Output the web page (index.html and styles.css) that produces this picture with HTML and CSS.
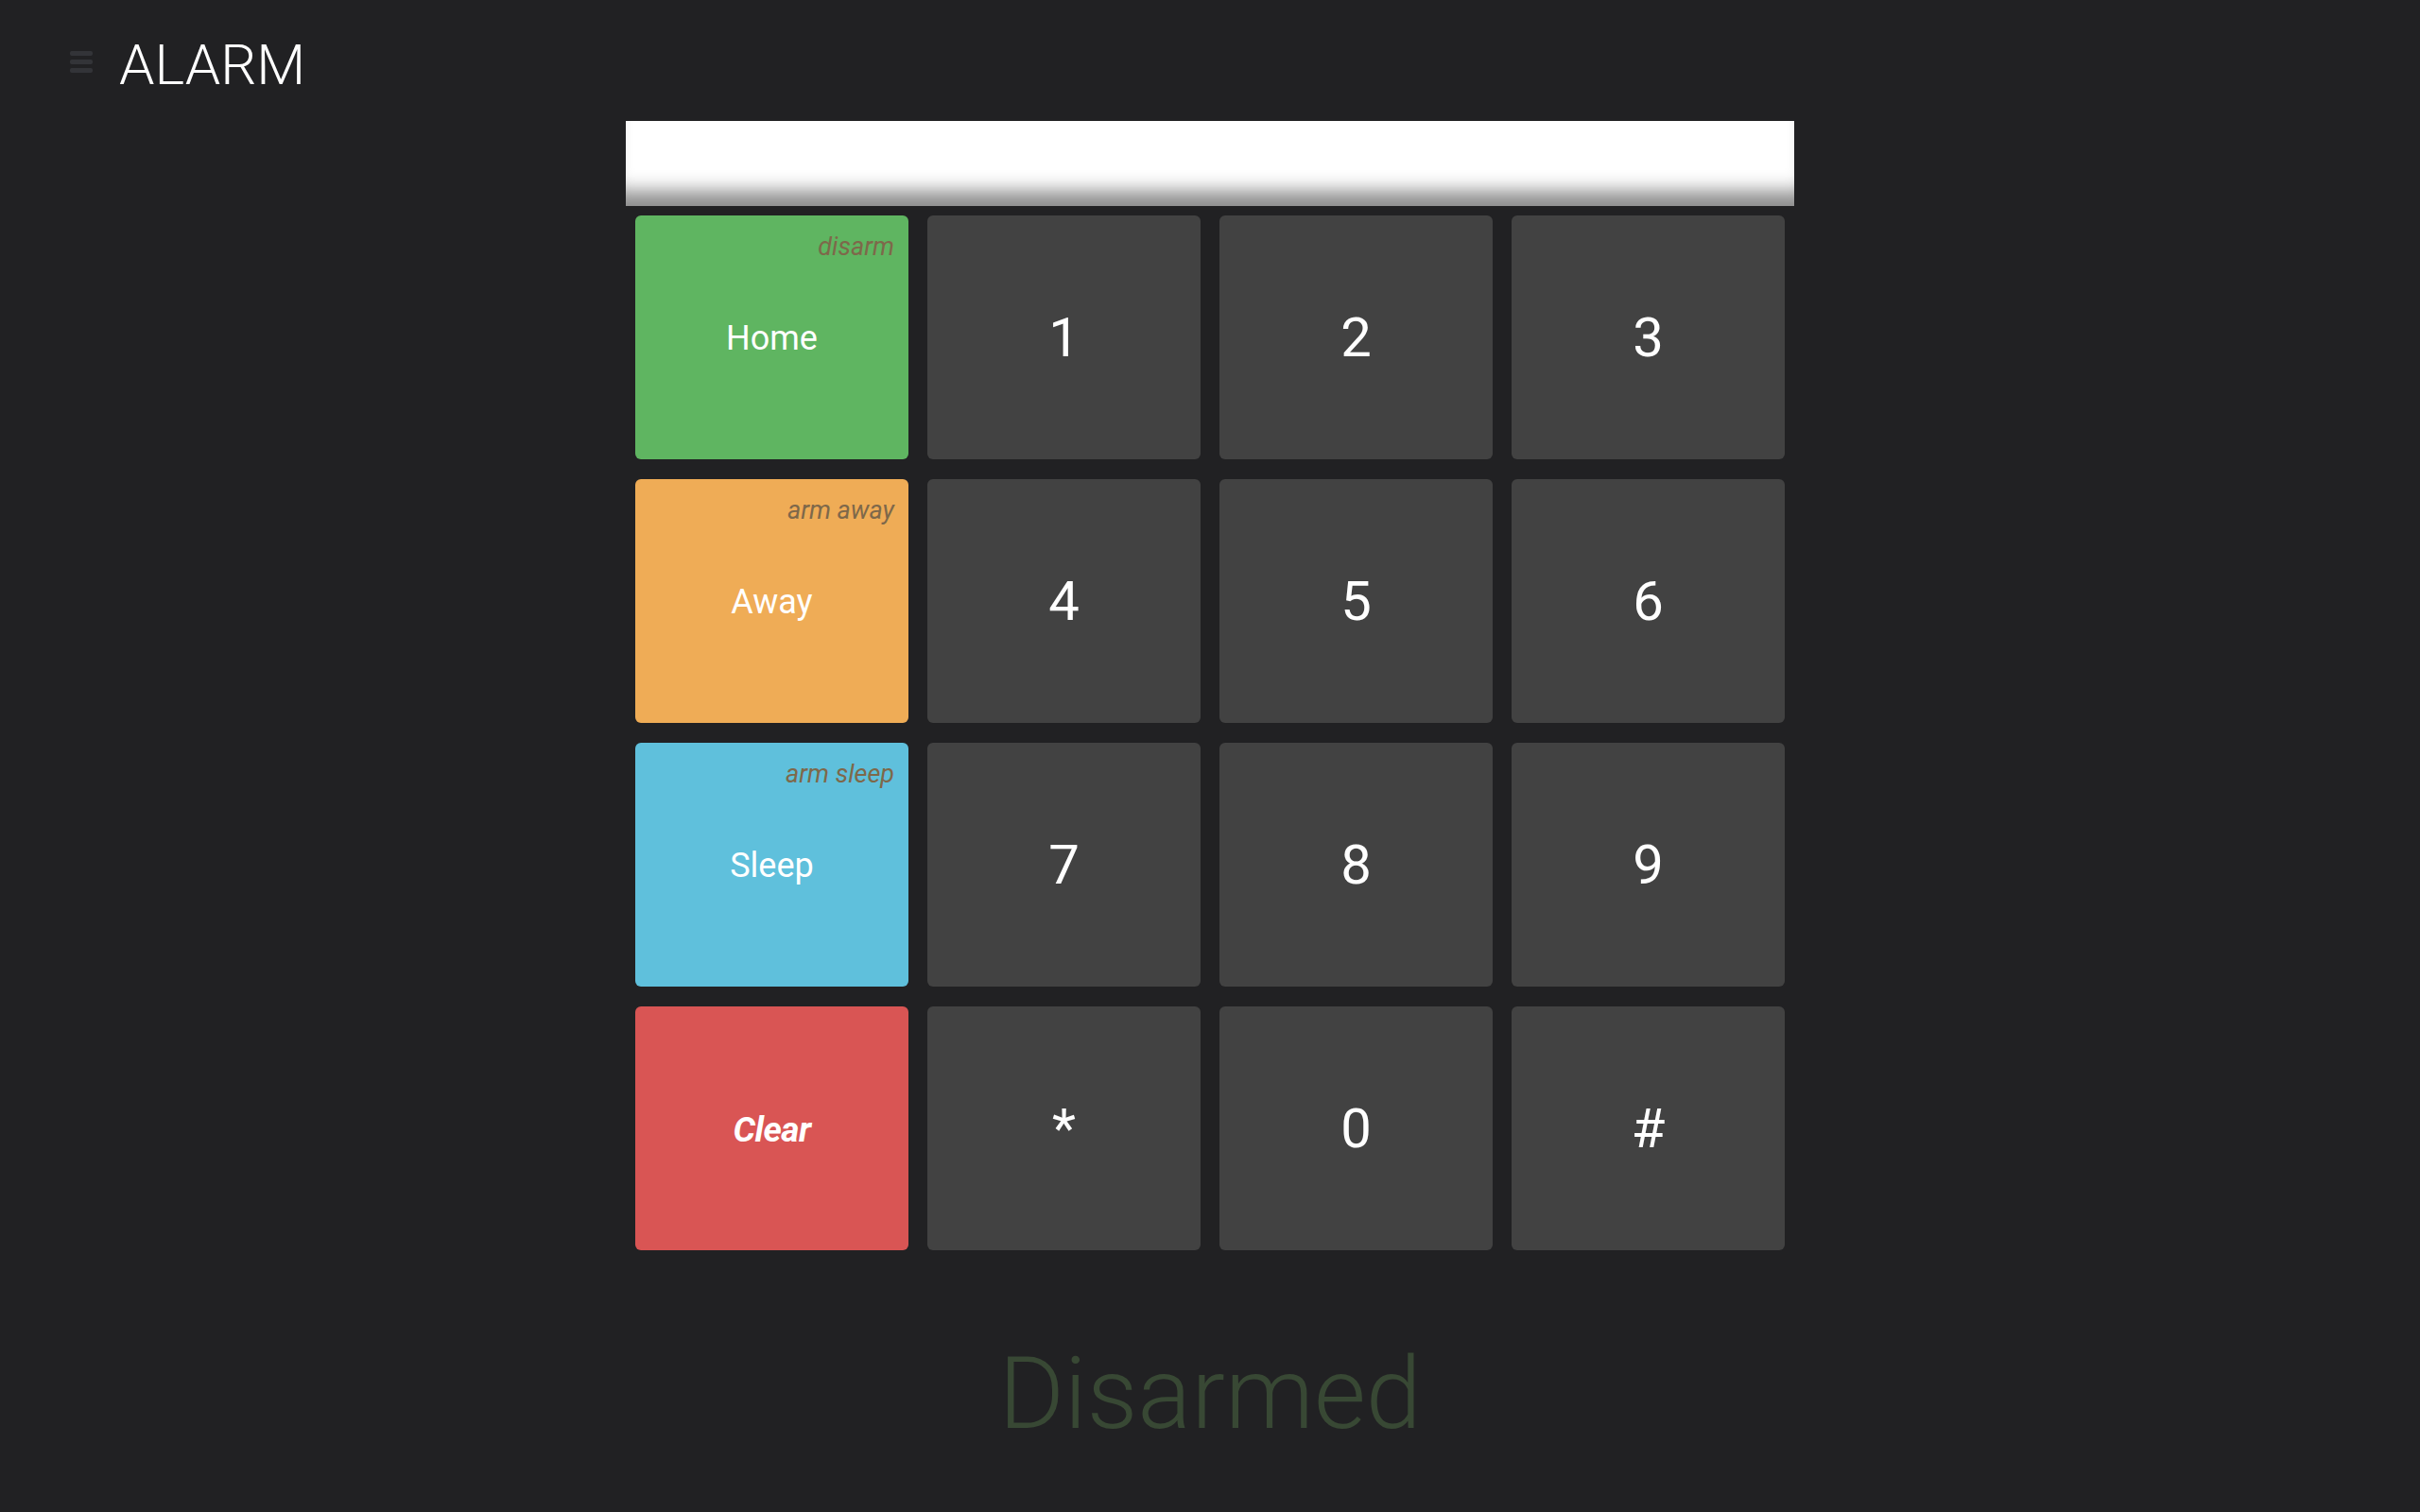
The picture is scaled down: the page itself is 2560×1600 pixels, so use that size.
FILE: index.html
```html
<!DOCTYPE html>
<html>
<head>
<meta charset="utf-8">
<title>Alarm</title>
<link rel="stylesheet" href="styles.css">
</head>
<body>
<header class="topbar">
  <div class="menu-icon"><span></span><span></span><span></span></div>
  <h1 class="title">ALARM</h1>
</header>
<main class="panel">
  <div class="display"></div>
  <div class="keypad">
    <div class="key action home"><span class="sub">disarm</span><span class="label">Home</span></div>
    <div class="key digit">1</div>
    <div class="key digit">2</div>
    <div class="key digit">3</div>
    <div class="key action away"><span class="sub">arm away</span><span class="label">Away</span></div>
    <div class="key digit">4</div>
    <div class="key digit">5</div>
    <div class="key digit">6</div>
    <div class="key action sleep"><span class="sub">arm sleep</span><span class="label">Sleep</span></div>
    <div class="key digit">7</div>
    <div class="key digit">8</div>
    <div class="key digit">9</div>
    <div class="key action clear"><span class="label clear-label">Clear</span></div>
    <div class="key digit">*</div>
    <div class="key digit">0</div>
    <div class="key digit">#</div>
  </div>
  <div class="status">Disarmed</div>
</main>
</body>
</html>
```

FILE: styles.css
```css
html, body {
  margin: 0;
  padding: 0;
}
body {
  background: #212123;
  font-family: Roboto, "Liberation Sans", sans-serif;
  color: #ffffff;
  width: 2560px;
  height: 1600px;
  overflow: hidden;
}
.topbar {
  display: flex;
  align-items: flex-start;
  height: 128px;
  box-sizing: border-box;
  padding: 39px 0 0 74px;
}
.menu-icon {
  display: flex;
  flex-direction: column;
  gap: 4px;
  width: 24px;
  margin-top: 15px;
  margin-right: 28px;
}
.menu-icon span {
  display: block;
  height: 5px;
  border-radius: 2px;
  background: #333438;
}
.title {
  margin: 0;
  font-size: 60px;
  line-height: 60px;
  font-weight: 300;
  letter-spacing: 0;
}
.panel {
  width: 1236px;
  margin: 0 auto;
}
.display {
  height: 90px;
  background: #ffffff;
  box-shadow: inset 0 -30px 20px -14px rgba(0, 0, 0, 0.45);
}
.keypad {
  display: grid;
  grid-template-columns: repeat(4, 289px);
  grid-auto-rows: 258px;
  column-gap: 20px;
  row-gap: 21px;
  padding: 10px 10px;
}
.key {
  position: relative;
  display: flex;
  align-items: center;
  justify-content: center;
  border-radius: 6px;
  background: #424242;
  color: #ffffff;
}
.digit {
  font-size: 58px;
  font-weight: 400;
}
.action .label {
  font-size: 36px;
  font-weight: 400;
  padding-top: 2px;
}
.action .clear-label {
  font-size: 37px;
  font-weight: 700;
  font-style: italic;
  letter-spacing: -0.5px;
}
.sub {
  position: absolute;
  top: 17px;
  right: 15px;
  font-size: 27px;
  font-style: italic;
  color: #7e684a;
  line-height: normal;
}
.home { background: #5fb561; }
.away { background: #efac56; }
.sleep { background: #5fc0dc; }
.clear { background: #d95554; }
.status {
  margin-top: 80px;
  text-align: center;
  font-size: 106px;
  font-weight: 300;
  line-height: normal;
  color: #384834;
}
```
